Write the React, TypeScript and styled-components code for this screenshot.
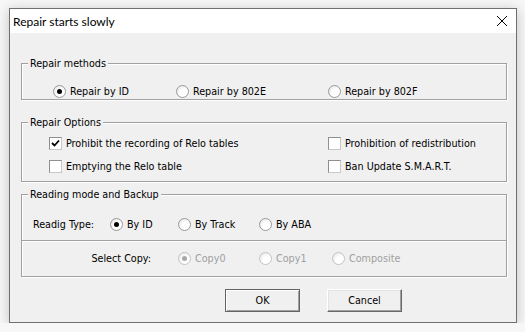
import React from 'react';
import styled, { createGlobalStyle } from 'styled-components';

const GlobalStyle = createGlobalStyle`
  html, body {
    margin: 0;
    padding: 0;
    background: #f7f7f7;
  }
  body {
    padding: 8px 0 0 9px;
    font-family: "DejaVu Sans Condensed", "DejaVu Sans", sans-serif;
    font-size: 10.7px;
    color: #000;
  }
`

const Window = styled.div`
  width: 508px;
  box-sizing: border-box;
  border: 1px solid #707070;
  background: #f0f0f0;
  box-shadow: 0 2px 12px rgba(0, 0, 0, 0.22);
`

const TitleBar = styled.div`
  height: 24px;
  background: #fff;
  display: flex;
  align-items: center;
  justify-content: space-between;
  padding: 0 9px 0 3px;
  font-family: "Lato", "Noto Sans", sans-serif;
  font-size: 12px;
`

const Title = styled.span`
  padding-top: 1px;
`

const CloseButton = styled.span`
  display: flex;
  width: 10px;
  height: 10px;
`

const Client = styled.div`
  padding: 24px 9px 10px 11px;
  display: flex;
  flex-direction: column;
`

const Group = styled.fieldset<{ $gap: number; $pt: number; $pb: number }>`
  margin: ${p => p.$gap}px 0 0 0;
  padding: ${p => p.$pt}px 0 ${p => p.$pb}px 0;
  border: 1px solid #a0a0a0;
  box-shadow: inset 1px 1px 0 #fff, 1px 1px 0 #fff;
  min-width: 0;
`

const Legend = styled.legend`
  margin-left: 6px;
  padding: 0 2px;
  line-height: 13px;
  background: #f0f0f0;
`

const OptionRow = styled.div<{ $cols: string; $pad: number; $top?: number }>`
  display: grid;
  grid-template-columns: ${p => p.$cols};
  padding-left: ${p => p.$pad}px;
  margin-top: ${p => p.$top || 0}px;
  height: 14px;
  align-items: center;
`

const RowLabel = styled.span<{ $right?: boolean }>`
  text-align: ${p => (p.$right ? 'right' : 'left')};
  padding-right: ${p => (p.$right ? 27 : 0)}px;
  white-space: nowrap;
`

const Option = styled.label<{ $disabled?: boolean }>`
  display: flex;
  align-items: center;
  gap: 4px;
  white-space: nowrap;
  color: ${p => (p.$disabled ? '#a0a0a0' : '#000')};
`

const RadioCircle = styled.span<{ $checked?: boolean; $disabled?: boolean }>`
  width: 13px;
  height: 13px;
  box-sizing: border-box;
  border-radius: 50%;
  border: 1px solid ${p => (p.$disabled ? '#c4c4c4' : '#9a9a9a')};
  background: radial-gradient(circle at 65% 65%, #fff 40%, #dcdcdc 100%);
  display: flex;
  align-items: center;
  justify-content: center;
  flex: none;
  &::after {
    content: '';
    width: 5px;
    height: 5px;
    border-radius: 50%;
    background: ${p => (p.$disabled ? '#a8a8a8' : '#000')};
    display: ${p => (p.$checked ? 'block' : 'none')};
  }
`

const CheckBoxBox = styled.span`
  width: 13px;
  height: 13px;
  box-sizing: border-box;
  border: 1px solid #8e8f8f;
  border-right-color: #c8c8c8;
  border-bottom-color: #c8c8c8;
  background: #fff;
  display: flex;
  align-items: center;
  justify-content: center;
  flex: none;
`

const Divider = styled.div`
  margin: 9px 0;
  border-top: 1px solid #a0a0a0;
  border-bottom: 1px solid #fff;
`

const ButtonBar = styled.div`
  display: flex;
  gap: 27px;
  padding-left: 204px;
  margin-top: 12px;
`

const Button = styled.button<{ $default?: boolean }>`
  width: 75px;
  height: 23px;
  box-sizing: border-box;
  font: inherit;
  color: #000;
  background: #f0f0f0;
  border: 1px solid;
  border-color: ${p => (p.$default ? '#646464' : '#fff #696969 #696969 #fff')};
  box-shadow: ${p =>
    p.$default
      ? 'inset 1px 1px 0 #fff, inset -1px -1px 0 #a0a0a0'
      : 'inset -1px -1px 0 #a0a0a0, inset 1px 1px 0 #e3e3e3'};
  padding: 0;
`

type RadioProps = { label: string; checked?: boolean; disabled?: boolean }

const Radio = ({ label, checked, disabled }: RadioProps) => (
  <Option $disabled={disabled}>
    <RadioCircle $checked={checked} $disabled={disabled} />
    {label}
  </Option>
)

const Check = ({ label, checked }: { label: string; checked?: boolean }) => (
  <Option>
    <CheckBoxBox>
      {checked && (
        <svg width="9" height="9" viewBox="0 0 9 9">
          <path d="M1 4 L3.5 6.5 L8 1.5" stroke="#000" strokeWidth="1.8" fill="none" />
        </svg>
      )}
    </CheckBoxBox>
    {label}
  </Option>
)

const App = () => {
  return (
    <>
      <GlobalStyle />
      <Window>
        <TitleBar>
          <Title>Repair starts slowly</Title>
          <CloseButton>
            <svg width="10" height="10" viewBox="0 0 10 10">
              <path d="M0 0 L10 10 M10 0 L0 10" stroke="#000" strokeWidth="1" />
            </svg>
          </CloseButton>
        </TitleBar>
        <Client>
          <Group $gap={0} $pt={14} $pb={1}>
            <Legend>Repair methods</Legend>
            <OptionRow $cols="123px 152px auto" $pad={31}>
              <Radio label="Repair by ID" checked />
              <Radio label="Repair by 802E" />
              <Radio label="Repair by 802F" />
            </OptionRow>
          </Group>

          <Group $gap={16} $pt={7} $pb={8}>
            <Legend>Repair Options</Legend>
            <OptionRow $cols="279px auto" $pad={27}>
              <Check label="Prohibit the recording of Relo tables" checked />
              <Check label="Prohibition of redistribution" />
            </OptionRow>
            <OptionRow $cols="279px auto" $pad={27} $top={9}>
              <Check label="Emptying the Relo table" />
              <Check label="Ban Update S.M.A.R.T." />
            </OptionRow>
          </Group>

          <Group $gap={6} $pt={16} $pb={11}>
            <Legend>Reading mode and Backup</Legend>
            <OptionRow $cols="77px 68px 81px auto" $pad={11}>
              <RowLabel>Readig Type:</RowLabel>
              <Radio label="By ID" checked />
              <Radio label="By Track" />
              <Radio label="By ABA" />
            </OptionRow>
            <Divider />
            <OptionRow $cols="156px 81px 73px auto" $pad={0}>
              <RowLabel $right>Select Copy:</RowLabel>
              <Radio label="Copy0" checked disabled />
              <Radio label="Copy1" disabled />
              <Radio label="Composite" disabled />
            </OptionRow>
          </Group>

          <ButtonBar>
            <Button $default>OK</Button>
            <Button>Cancel</Button>
          </ButtonBar>
        </Client>
      </Window>
    </>
  );
};

export default App;
